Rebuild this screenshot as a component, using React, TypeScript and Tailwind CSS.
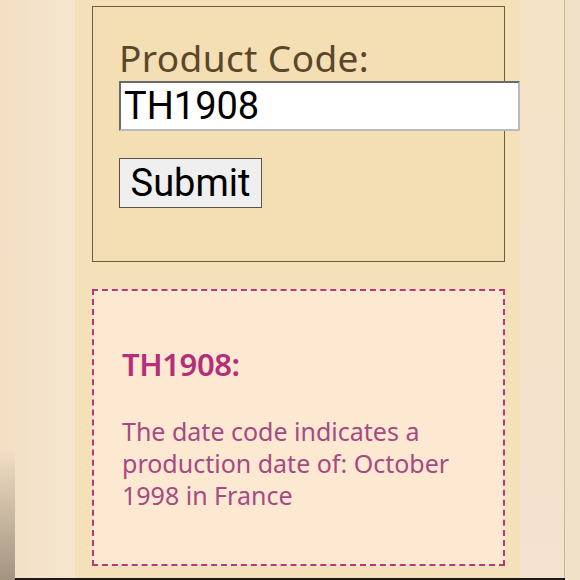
export default function App() {
  return (
    <div className="relative flex h-[580px] w-[580px] overflow-hidden bg-[#f3e3c8]">
      {/* left strip */}
      <div className="flex h-full w-[75px] bg-gradient-to-r from-[#f2dfc4] to-[#f6e6cf]">
        <div className="mt-auto h-[130px] w-[15px] bg-gradient-to-b from-[#f2dfc4] to-[#a39381]" />
      </div>

      {/* main column */}
      <div className="flex h-full w-[445px] flex-col bg-[#f4e0b9] pl-[17px] pt-[6px]">
        <form
          className="h-[256px] w-[413px] border border-[#6e5c3e] bg-[#f4dfb4] pl-[26px] pt-[29px]"
          onSubmit={(e) => e.preventDefault()}
        >
          <label className="block font-['Noto_Sans',sans-serif] text-[37px] leading-[44px] tracking-[0.4px] text-[#5a472b]">
            Product Code:
          </label>
          <input
            defaultValue="TH1908"
            className="mt-[1px] h-[50px] w-[401px] border-2 border-[#6a6a6a] border-b-[#bbb] border-r-[#bbb] bg-white pl-[3px] font-['Roboto',sans-serif] text-[38px] text-black outline-none"
          />
          <button
            type="submit"
            className="mt-[27px] block h-[50px] w-[143px] border border-[#5b5346] bg-[#efefef] font-['Roboto',sans-serif] text-[38px] leading-none text-black"
          >
            Submit
          </button>
        </form>

        <div className="mt-[27px] h-[277px] w-[413px] border-2 border-dashed border-[#b8387a] bg-[#fde9d2] pl-[28px] pt-[53px]">
          <h3 className="font-['Noto_Sans',sans-serif] text-[31px] font-semibold leading-[40px] tracking-[-0.4px] text-[#b32f7a]">
            TH1908:
          </h3>
          <p className="mt-[31px] w-[350px] font-['Noto_Sans',sans-serif] text-[25px] leading-[32px] text-[#a74a83]">
            The date code indicates a production date of: October 1998 in France
          </p>
        </div>
      </div>

      {/* right strip */}
      <div className="h-full w-[44px] bg-gradient-to-b from-[#f4e3c6] to-[#f5e2cf]" />
      <div className="h-full w-px bg-[#c9b79a]" />
      <div className="h-full flex-1 bg-[#f1e1c8]" />

      {/* bottom edge */}
      <div className="absolute bottom-0 left-[15px] h-[2px] w-[550px] bg-[#1a1a1a]" />
    </div>
  );
}
